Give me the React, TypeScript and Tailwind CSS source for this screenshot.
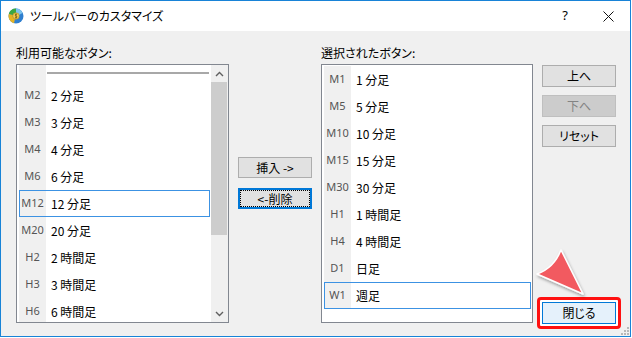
const available: [string, string][] = [
  ['M2', '2 分足'],
  ['M3', '3 分足'],
  ['M4', '4 分足'],
  ['M6', '6 分足'],
  ['M12', '12 分足'],
  ['M20', '20 分足'],
  ['H2', '2 時間足'],
  ['H3', '3 時間足'],
  ['H6', '6 時間足'],
];

const selected: [string, string][] = [
  ['M1', '1 分足'],
  ['M5', '5 分足'],
  ['M10', '10 分足'],
  ['M15', '15 分足'],
  ['M30', '30 分足'],
  ['H1', '1 時間足'],
  ['H4', '4 時間足'],
  ['D1', '日足'],
  ['W1', '週足'],
];

function Row({ code, label, active }: { code: string; label: string; active?: boolean }) {
  return (
    <div
      className={
        active
          ? 'flex h-[27px] items-center [outline:1px_solid_#3c92e3] [outline-offset:-1px]'
          : 'flex h-[27px] items-center'
      }
    >
      <div className="flex h-full w-[27px] shrink-0 items-center justify-center bg-[#f0f0f0] font-['Noto_Sans',sans-serif] text-[11px] text-[#555555]">
        {code}
      </div>
      <div className="pl-[5px] text-[12px] text-black">{label}</div>
    </div>
  );
}

function Chevron({ up }: { up?: boolean }) {
  return (
    <svg width="9" height="6" viewBox="0 0 9 6">
      <path
        d={up ? 'M1 5 L4.5 1.5 L8 5' : 'M1 1 L4.5 4.5 L8 1'}
        fill="none"
        stroke="#606060"
        strokeWidth="1.4"
      />
    </svg>
  );
}

function Btn({ children, disabled }: { children: React.ReactNode; disabled?: boolean }) {
  return (
    <div
      className={
        disabled
          ? 'flex h-[22px] w-[74px] items-center justify-center border border-[#bfbfbf] bg-[#cccccc] text-[12px] text-[#838383]'
          : 'flex h-[22px] w-[74px] items-center justify-center border border-[#adadad] bg-[#e1e1e1] text-[12px] text-black'
      }
    >
      {children}
    </div>
  );
}

function AppIcon() {
  return (
    <svg width="16" height="16" viewBox="0 0 16 16">
      <circle cx="8" cy="8" r="7.5" fill="#2f7fcf" />
      <path d="M8 0.5 A7.5 7.5 0 0 0 0.8 6 L5 7 A3 3 0 0 1 8 5 Z" fill="#3aa843" />
      <path d="M0.8 6 A7.5 7.5 0 0 0 6 15.2 L7 11 A3 3 0 0 1 5 7 Z" fill="#e6b422" />
      <path d="M8 0.5 A7.5 7.5 0 0 1 14.5 5 L11 7 A3 3 0 0 0 8 5 Z" fill="#7cc4ee" />
      <circle cx="8" cy="8" r="3.2" fill="#f4d35e" stroke="#b88a10" strokeWidth="0.6" />
      <path d="M9.2 6.6 C8.6 6 7 6.1 7 7.1 C7 8.1 9.2 7.8 9.2 8.9 C9.2 9.9 7.5 10 6.8 9.4 M8 5.6 V10.4" fill="none" stroke="#6b4a00" strokeWidth="0.7" />
    </svg>
  );
}

export default function App() {
  return (
    <div className="h-[338px] w-[632px] bg-white font-['Noto_Sans_CJK_JP',sans-serif] [font-feature-settings:'palt']">
      <div className="relative flex h-[337px] w-[631px] flex-col border border-[#1883d7] bg-[#f0f0f0]">
        {/* タイトルバー */}
        <div className="flex h-[30px] shrink-0 items-center bg-white pl-[7px]">
          <AppIcon />
          <span className="ml-[6px] text-[12px] text-black">ツールバーのカスタマイズ</span>
          <span className="ml-auto font-['Noto_Sans',sans-serif] text-[13px] text-black">?</span>
          <svg className="ml-[35px] mr-[16px]" width="11" height="11" viewBox="0 0 11 11">
            <path d="M0.5 0.5 L10.5 10.5 M10.5 0.5 L0.5 10.5" stroke="#111" strokeWidth="1" />
          </svg>
        </div>

        {/* 本体 */}
        <div className="flex flex-1 gap-[9px] pl-[15px] pt-[14px]">
          {/* 利用可能なボタン */}
          <div className="flex w-[213px] flex-col">
            <div className="h-[16px] text-[12px] leading-[16px] text-black">利用可能なボタン:</div>
            <div className="mt-[3px] flex h-[259px] border border-[#828790] bg-white">
              <div className="flex-1 overflow-hidden pl-[2px] pr-[1px]">
                <div className="flex h-[17px]">
                  <div className="w-[27px] shrink-0 bg-[#f0f0f0]" />
                  <div className="ml-[1px] mr-[1px] mt-[7px] h-[2px] flex-1 bg-[#a8a8a8]" />
                </div>
                {available.map(([c, l]) => (
                  <Row key={c} code={c} label={l} active={c === 'M12'} />
                ))}
              </div>
              <div className="flex w-[17px] shrink-0 flex-col bg-[#f0f0f0]">
                <div className="flex h-[17px] items-center justify-center">
                  <Chevron up />
                </div>
                <div className="mr-[1px] h-[153px] bg-[#cdcdcd]" />
                <div className="mt-auto flex h-[17px] items-center justify-center">
                  <Chevron />
                </div>
              </div>
            </div>
          </div>

          {/* 挿入・削除 */}
          <div className="flex w-[74px] flex-col gap-[10px] pt-[112px]">
            <div className="flex h-[21px] items-center justify-center border border-[#adadad] bg-[#e1e1e1] text-[12px]">
              挿入 -&gt;
            </div>
            <div className="flex h-[21px] items-center justify-center border-2 border-[#0078d7] bg-[#e1e1e1] text-[12px] [outline:1px_dotted_#000] [outline-offset:-3px]">
              &lt;-削除
            </div>
          </div>

          {/* 選択されたボタン */}
          <div className="flex w-[212px] flex-col">
            <div className="h-[16px] text-[12px] leading-[16px] text-black">選択されたボタン:</div>
            <div className="mt-[3px] h-[259px] overflow-hidden border border-[#828790] bg-white pl-[2px] pr-[1px] pt-[1px]">
              {selected.map(([c, l]) => (
                <Row key={c} code={c} label={l} active={c === 'W1'} />
              ))}
            </div>
          </div>

          {/* 右ボタン */}
          <div className="flex w-[74px] flex-col gap-[8px] pt-[20px]">
            <Btn>上へ</Btn>
            <Btn disabled>下へ</Btn>
            <Btn>リセット</Btn>
            <div className="-mx-[5px] mb-[7px] mt-auto rounded-[4px] border-[3px] border-[#ff1010] bg-white p-[2px]">
              <div className="flex h-[22px] w-[74px] items-center justify-center border border-[#0078d7] bg-[#e5f1fb] text-[12px]">
                閉じる
              </div>
            </div>
          </div>
        </div>

        {/* 注目矢印 */}
        <svg className="absolute left-[528px] top-[243px]" width="64" height="58" viewBox="528 243 64 58">
          <defs>
            <filter id="sh" x="-20%" y="-20%" width="150%" height="150%">
              <feDropShadow dx="1" dy="2" stdDeviation="1.5" floodColor="#000" floodOpacity="0.35" />
            </filter>
          </defs>
          <path
            d="M560 249 L582 293 L536 273 Q553 267 560 249 Z"
            fill="#f25a60"
            stroke="#fff"
            strokeWidth="1.5"
            strokeLinejoin="round"
            filter="url(#sh)"
          />
        </svg>

        {/* サイズ変更グリップ */}
        <svg className="absolute bottom-[1px] right-[1px]" width="8" height="8" viewBox="0 0 8 8">
          <rect x="6" y="0" width="2" height="2" fill="#b8b8b8" />
          <rect x="3" y="3" width="2" height="2" fill="#b8b8b8" />
          <rect x="6" y="3" width="2" height="2" fill="#b8b8b8" />
          <rect x="0" y="6" width="2" height="2" fill="#b8b8b8" />
          <rect x="3" y="6" width="2" height="2" fill="#b8b8b8" />
          <rect x="6" y="6" width="2" height="2" fill="#b8b8b8" />
        </svg>
      </div>
    </div>
  );
}
